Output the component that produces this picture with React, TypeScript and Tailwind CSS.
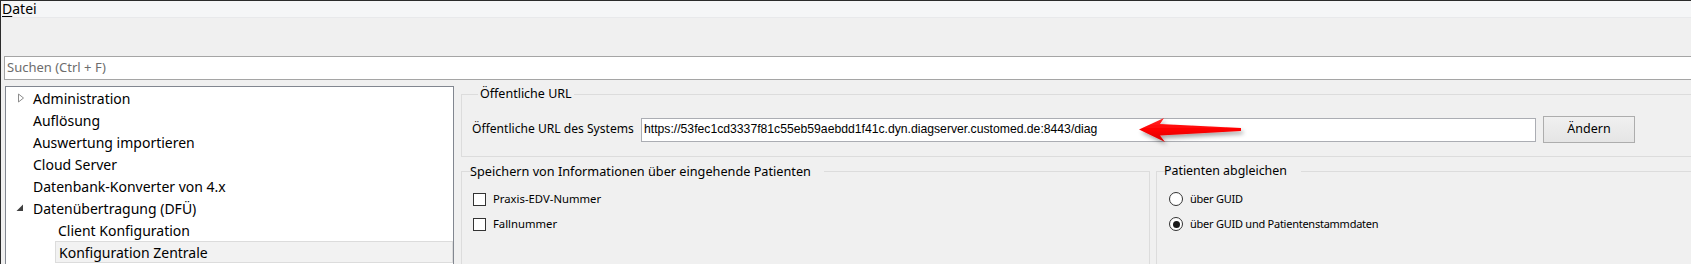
import React from 'react'

const treeItems = [
  { label: 'Administration', level: 0, arrow: 'closed' },
  { label: 'Auflösung', level: 0 },
  { label: 'Auswertung importieren', level: 0 },
  { label: 'Cloud Server', level: 0 },
  { label: 'Datenbank-Konverter von 4.x', level: 0 },
  { label: 'Datenübertragung (DFÜ)', level: 0, arrow: 'open' },
  { label: 'Client Konfiguration', level: 1 },
  { label: 'Konfiguration Zentrale', level: 1, selected: true },
]

const sans = "font-['Noto_Sans',sans-serif]"

function TreeArrow({ type }: { type?: string }) {
  if (type === 'closed') {
    return (
      <svg width="8" height="10" viewBox="0 0 8 10" className="absolute left-[11px] top-[6px]">
        <path d="M1.5 1 L6.5 5 L1.5 9 Z" fill="none" stroke="#8c8c8c" strokeWidth="1" />
      </svg>
    )
  }
  if (type === 'open') {
    return (
      <svg width="8" height="8" viewBox="0 0 8 8" className="absolute left-[10px] top-[7px]">
        <path d="M7 0.5 L7 7 L0.5 7 Z" fill="#404040" />
      </svg>
    )
  }
  return null
}

function Checkbox({ label }: { label: string }) {
  return (
    <label className="flex items-center gap-[7px] h-[20px]">
      <span className="w-[13px] h-[13px] border border-[#333] bg-white" />
      <span>{label}</span>
    </label>
  )
}

function Radio({ label, checked }: { label: string; checked?: boolean }) {
  return (
    <label className="flex items-center gap-[7px] h-[20px]">
      <span className="w-[14px] h-[14px] rounded-full border border-[#333] bg-white flex items-center justify-center">
        {checked && <span className="w-[7px] h-[7px] rounded-full bg-[#1a1a1a]" />}
      </span>
      <span className="text-[11px] tracking-[-0.25px]">{label}</span>
    </label>
  )
}

export default function App() {
  return (
    <div className={`relative w-[1691px] h-[264px] overflow-hidden bg-[#f0f0f0] border-l border-t border-[#2b2b2b] text-black ${sans}`}>
      {/* menu */}
      <div className="h-[17px] bg-[#f5f6f7] border-b border-[#e8e9eb] flex items-center pl-[1px] text-[14px] leading-none">
        <span><span className="underline underline-offset-2">D</span>atei</span>
      </div>

      {/* search */}
      <div className="mt-[38px] ml-[3px] w-[1700px] h-[24px] border border-[#a5a5a5] bg-white flex items-center pl-[2px] text-[13px] text-[#6d6d6d]">
        Suchen (Ctrl + F)
      </div>

      <div className="flex mt-[6px]">
        {/* tree */}
        <div className="ml-[4px] w-[449px] h-[200px] shrink-0 border border-[#828790] bg-white text-[14px]">
          {treeItems.map((item) => (
            <div key={item.label} className="relative h-[22px] flex items-center">
              <TreeArrow type={item.arrow} />
              <div
                className={`h-[22px] flex items-center pl-[3px] ${item.level === 1 ? 'ml-[49px]' : 'ml-[24px]'} ${
                  item.selected ? 'flex-1 bg-[#f2f2f2] border border-[#dcdcdc] pl-[2px]' : ''
                }`}
              >
                {item.label}
              </div>
            </div>
          ))}
        </div>

        {/* settings */}
        <div className="flex-1 overflow-hidden pl-[7px] text-[12px]">
          <fieldset className="w-[1240px] border border-[#dcdcdc] pt-[14px] pb-[13px] pl-[10px]">
            <legend className="ml-[6px] px-[2px] leading-[16px] text-[12.5px]">Öffentliche URL</legend>
            <div className="flex items-center">
              <span className="w-[169px] shrink-0 text-[12.1px]">Öffentliche URL des Systems</span>
              <div className="w-[895px] h-[24px] border border-[#abadb3] bg-white flex items-center pl-[2px] font-['Liberation_Sans',sans-serif] text-[12.2px]">
                https://53fec1cd3337f81c55eb59aebdd1f41c.dyn.diagserver.customed.de:8443/diag
              </div>
              <button className="ml-[7px] w-[92px] h-[27px] border border-[#adadad] bg-gradient-to-b from-[#f0f0f0] to-[#e5e5e5] text-[12.5px]">
                Ändern
              </button>
            </div>
          </fieldset>

          <div className="flex gap-[6px] mt-[6px] text-[11.3px]">
            <fieldset className="w-[689px] h-[102px] shrink-0 border border-[#dcdcdc] pl-[11px] pt-[10px]">
              <legend className="ml-[6px] px-[2px] leading-[16px] text-[12.7px] -translate-x-[11px]">
                Speichern von Informationen über eingehende Patienten
              </legend>
              <div className="flex flex-col gap-[5px]">
                <Checkbox label="Praxis-EDV-Nummer" />
                <Checkbox label="Fallnummer" />
              </div>
            </fieldset>
            <fieldset className="w-[600px] h-[102px] shrink-0 border border-[#dcdcdc] pl-[12px] pt-[10px]">
              <legend className="ml-[5px] px-[2px] leading-[16px] text-[12.4px] -translate-x-[12px]">Patienten abgleichen</legend>
              <div className="flex flex-col gap-[5px]">
                <Radio label="über GUID" />
                <Radio label="über GUID und Patientenstammdaten" checked />
              </div>
            </fieldset>
          </div>
        </div>
      </div>

      {/* red annotation arrow */}
      <svg
        className="absolute left-[1125px] top-[105px] pointer-events-none"
        width="130"
        height="50"
        viewBox="1125 105 130 50"
      >
        <defs>
          <filter id="arrowShadow" x="-20%" y="-50%" width="140%" height="200%">
            <feDropShadow dx="2" dy="3" stdDeviation="2" floodColor="#000" floodOpacity="0.35" />
          </filter>
          <linearGradient id="arrowFill" x1="0" y1="0" x2="0" y2="1">
            <stop offset="0" stopColor="#ff2a2a" />
            <stop offset="0.5" stopColor="#ff0000" />
            <stop offset="1" stopColor="#d80000" />
          </linearGradient>
        </defs>
        <path
          d="M1138 128.5 L1163 117 L1159 123 L1240 127 L1240 130 L1159 134.5 L1164 141 Z"
          fill="url(#arrowFill)"
          filter="url(#arrowShadow)"
        />
      </svg>
    </div>
  )
}
